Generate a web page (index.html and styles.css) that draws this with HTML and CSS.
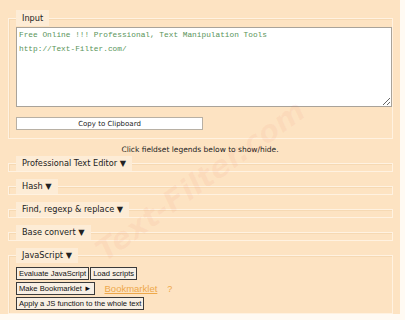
FILE: index.html
```html
<!DOCTYPE html>
<html>
<head>
<meta charset="utf-8">
<link rel="stylesheet" href="styles.css">
</head>
<body>
<div class="page">
  <fieldset class="box input-box">
    <legend class="lg">Input</legend>
    <textarea class="ta" spellcheck="false">Free Online !!! Professional, Text Manipulation Tools
http://Text-Filter.com/</textarea>
    <button class="copy">Copy to Clipboard</button>
  </fieldset>
  <p class="hint">Click fieldset legends below to show/hide.</p>
  <fieldset class="box closed"><legend class="lg">Professional Text Editor ▼</legend></fieldset>
  <fieldset class="box closed"><legend class="lg">Hash ▼</legend></fieldset>
  <fieldset class="box closed"><legend class="lg">Find, regexp &amp; replace ▼</legend></fieldset>
  <fieldset class="box closed"><legend class="lg">Base convert ▼</legend></fieldset>
  <fieldset class="box js">
    <legend class="lg">JavaScript ▼</legend>
    <div class="row first"><button class="btn">Evaluate JavaScript</button><button class="btn">Load scripts</button></div>
    <div class="row"><button class="btn">Make Bookmarklet ►</button><a class="bm" href="#">Bookmarklet</a><a class="q" href="#">?</a></div>
    <div class="row"><button class="btn">Apply a JS function to the whole text</button></div>
  </fieldset>
  <span class="wm">Text-Filter.com</span>
</div>
</body>
</html>
```
FILE: styles.css
```css
html, body {
  margin: 0;
  background: #fffaf3;
}
.page {
  position: relative;
  overflow: hidden;
  width: 400px;
  height: 314px;
  box-sizing: border-box;
  padding-top: 10px;
  background: #fde3c2;
  font-family: "DejaVu Sans", Verdana, sans-serif;
  font-size: 7.5px;
  color: #222;
}
.box {
  margin: 0 7px 0 8px;
  padding: 0 7px 0 7px;
  border: 1px solid #fff2e1;
  box-shadow: inset 1px 1px 0 #f6d9b3;
  min-width: 0;
}
.lg {
  padding: 0 6px;
  height: 16px;
  line-height: 16px;
  background: #fdecd6;
  color: #222;
  font-size: 8.2px;
  cursor: pointer;
}
.input-box {
  padding-bottom: 8px;
}
.ta {
  display: block;
  box-sizing: border-box;
  width: 376px;
  height: 80px;
  margin: 1px 0 0 0;
  padding: 0 2px;
  border: 1px solid #a9a39a;
  background: #fff;
  resize: vertical;
  font-family: "Liberation Mono", "DejaVu Sans Mono", monospace;
  font-size: 7.8px;
  line-height: 14px;
  color: #5a955a;
}
.copy {
  display: block;
  box-sizing: border-box;
  width: 187px;
  height: 13px;
  margin: 10px 0 0 0;
  padding: 0;
  border: 1px solid #b8b0a4;
  background: #fff;
  font-family: "DejaVu Sans", Verdana, sans-serif;
  font-size: 7px;
  color: #222;
}
.hint {
  margin: 0;
  height: 17px;
  line-height: 22px;
  text-align: center;
}
.closed {
  height: 4px;
  padding-bottom: 0;
  margin-bottom: 7px;
}
.closed .lg,
.js .lg {
  height: 15px;
  line-height: 15px;
}
.js {
  padding-bottom: 3px;
  margin-top: 1px;
}
.row {
  display: flex;
  align-items: center;
  gap: 1px;
  margin-top: 2px;
}
.row.first {
  margin-top: 4px;
}
.btn {
  box-sizing: border-box;
  height: 13px;
  padding: 0 2px;
  margin: 0;
  border: 1px solid #3a3a3a;
  background: #f7efe4;
  font-family: "Liberation Sans", Arial, sans-serif;
  font-size: 7.6px;
  color: #111;
  line-height: 11px;
}
.bm {
  margin-left: 9px;
  font-family: "Liberation Sans", Arial, sans-serif;
  font-size: 9.5px;
  color: #eea84a;
}
.q {
  margin-left: 9px;
  font-family: "Liberation Sans", Arial, sans-serif;
  font-size: 9px;
  color: #eea84a;
  text-decoration: none;
}
.wm {
  position: absolute;
  left: 75px;
  top: 163px;
  transform: rotate(-36deg);
  font-family: "DejaVu Sans", sans-serif;
  font-weight: bold;
  font-style: italic;
  font-size: 30px;
  color: rgba(235, 90, 70, 0.06);
  pointer-events: none;
  white-space: nowrap;
}
```
